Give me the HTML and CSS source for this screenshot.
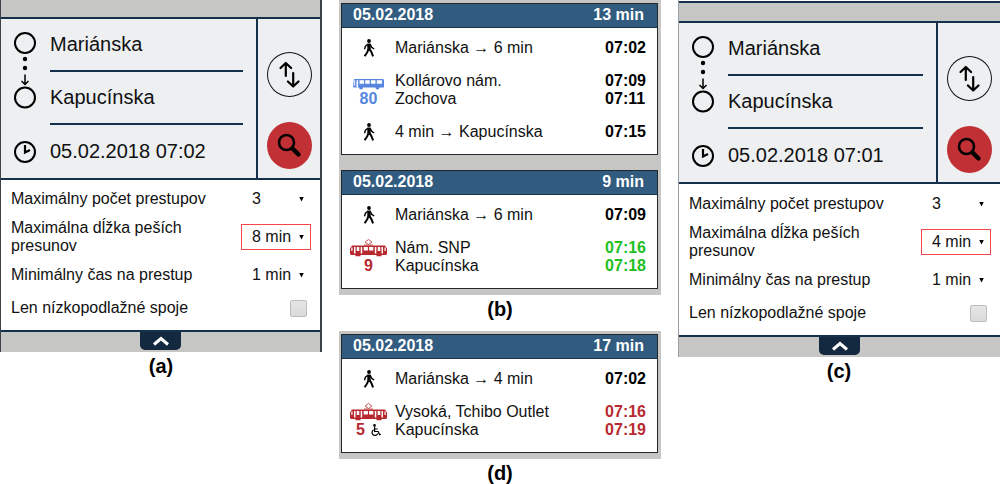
FILE: index.html
```html
<!DOCTYPE html>
<html lang="sk">
<head>
<meta charset="utf-8">
<meta name="viewport" content="width=device-width, initial-scale=1">
<title>05.02.2018</title>
<link rel="stylesheet" href="styles.css">
</head>
<body>
<svg class="sprite" aria-hidden="true">
  <symbol id="route" viewBox="0 0 24 78">
    <g fill="none" stroke="#000" stroke-width="2">
      <circle cx="12" cy="12" r="10"/>
      <circle cx="12" cy="66.500" r="10"/>
      <path d="M12 43.500v10M8.500 50l3.500 3.500 3.500-3.500" stroke-width="1.500"/>
    </g>
    <circle cx="12" cy="28" r="2.200"/>
    <circle cx="12" cy="37" r="2.200"/>
  </symbol>
  <symbol id="clock" viewBox="0 0 24 24">
    <circle cx="12" cy="12" r="10" fill="none" stroke="#000" stroke-width="2"/>
    <path d="M12 5v7.500l5-2.600" fill="none" stroke="#000" stroke-width="2.200"/>
  </symbol>
  <symbol id="swap" viewBox="0 0 45 45">
    <g fill="none" stroke="#000" stroke-linecap="round" stroke-linejoin="round" stroke-width="2.200">
      <path d="M18.800 24V11.500M13.500 16l5.300-5 5.300 5"/>
      <path d="M26.200 21v13M20.900 29.500l5.300 5 5.300-5"/>
    </g>
  </symbol>
  <symbol id="search" viewBox="0 0 45 47">
    <circle cx="19.500" cy="20.500" r="7.500" fill="none" stroke="#000" stroke-width="2.600"/>
    <path d="M25.500 26.500l6 6" stroke="#000" stroke-width="4.400" stroke-linecap="round"/>
  </symbol>
  <symbol id="chevron" viewBox="0 0 18 10">
    <path d="M2 8.500l7-6 7 6" fill="none" stroke="#fff" stroke-width="3"/>
  </symbol>
  <symbol id="walk" viewBox="0 0 12 18">
    <circle cx="6" cy="2" r="1.900"/>
    <path d="M4.300 4.500h3.400v6.300H4.300z"/>
    <g fill="none" stroke="#000" stroke-linejoin="round">
      <path d="M5 5.300L2.500 7 1.500 10.200M7.200 5.300l1.500 3 2.500 1.700" stroke-width="1.400"/>
      <path d="M5.200 10.500L4.300 13.300 1.600 17.200M6.700 10.300l1.800 3 1.600 4" stroke-width="2"/>
    </g>
  </symbol>
  <symbol id="bus" viewBox="0 0 31 12">
    <path fill="#5686e0" fill-rule="evenodd" d="M1 1h29.300l.7 1.500v7H.5L0 8.500zM1.200 2.200V8h.9V2.200zM3.500 2.200v7h1.600v-7zM6.500 2.200v3.500H11V2.200zM12.200 2.200v3.500h4.500V2.200zM18 2.200v3.500h4.500V2.200zM23.800 2.200v3.500H29V2.200z"/>
    <circle cx="8" cy="9.500" r="2" fill="#5686e0"/>
    <circle cx="24.500" cy="9.500" r="2" fill="#5686e0"/>
  </symbol>
  <symbol id="tram" viewBox="0 0 37 18">
    <path d="M18.500 0.500l-3.500 2.700 3.500 2.300 3.500-2.300zM14 6h9" fill="none" stroke="#c8565a"/>
    <path fill="#b8292f" fill-rule="evenodd" d="M2 6.500h33l2 3v5.500l-1 1H1l-1-1V9.500zM1.300 8.500V12h1.200V8.500zM4 8v6.500h1.500V8zM6.700 8v4h2.600V8zM10.700 8v6.500h1.500V8zM13.700 8v3.500h4.200V8zM19.100 8v3.500h4.200V8zM24.800 8v6.500h1.500V8zM27.700 8v4h2.600V8zM31.500 8v6.500H33V8zM34.500 8.500V12h1.200V8.500z"/>
    <path d="M5.500 16.500h5M26.500 16.500h5" stroke="#b8292f" stroke-width="1.600"/>
  </symbol>
  <symbol id="wheelchair" viewBox="0 0 10 12">
    <circle cx="3.500" cy="1.400" r="1.300"/>
    <path d="M3.600 2.800v4.700h3.600l1.500 3.200 1.200-.5M3.800 5h2.900M2.600 5.800a3 3 0 1 0 4.300 3.600" fill="none" stroke="#000" stroke-width="1.200"/>
  </symbol>
</svg>

<main class="board">
  <figure class="shot">
    <div class="planner">
      <div class="strip"></div>
      <form class="query">
        <div class="fields">
          <svg class="route-icon" aria-hidden="true"><use href="#route"/></svg>
          <input class="field" type="text" aria-label="Odkiaľ" value="Mariánska">
          <input class="field" type="text" aria-label="Kam" value="Kapucínska">
          <svg class="clock-icon" aria-hidden="true"><use href="#clock"/></svg>
          <input class="field field-plain" type="text" aria-label="Čas" value="05.02.2018 07:02">
        </div>
        <div class="actions">
          <button class="swap" type="button" aria-label="Vymeniť"><svg aria-hidden="true"><use href="#swap"/></svg></button>
          <button class="search" type="submit" aria-label="Hľadať"><svg aria-hidden="true"><use href="#search"/></svg></button>
        </div>
      </form>
      <div class="settings">
        <div class="setting">
          <label for="a-transfers">Maximálny počet prestupov</label>
          <span class="picker"><select id="a-transfers"><option>3</option></select></span>
        </div>
        <div class="setting">
          <label for="a-walk">Maximálna dĺžka peších presunov</label>
          <span class="picker picker-marked"><select id="a-walk"><option>8 min</option></select></span>
        </div>
        <div class="setting">
          <label for="a-time">Minimálny čas na prestup</label>
          <span class="picker"><select id="a-time"><option>1 min</option></select></span>
        </div>
        <div class="setting">
          <label for="a-low">Len nízkopodlažné spoje</label>
          <input class="check" id="a-low" type="checkbox">
        </div>
      </div>
      <div class="strip strip-bottom">
        <button class="toggle" type="button" aria-label="Zbaliť"><svg aria-hidden="true"><use href="#chevron"/></svg></button>
      </div>
    </div>
    <figcaption>(a)</figcaption>
  </figure>

  <div class="middle">
    <figure class="shot">
      <div class="results">
        <article class="card">
          <header class="card-head"><span>05.02.2018</span><span>13 min</span></header>
          <ul class="legs">
            <li class="leg">
              <div class="mode"><svg class="walk" aria-hidden="true"><use href="#walk"/></svg></div>
              <div class="stops">Mariánska → 6 min</div>
              <div class="times">07:02</div>
            </li>
            <li class="leg">
              <div class="mode line-bus"><svg class="bus" aria-hidden="true"><use href="#bus"/></svg><span class="line">80</span></div>
              <div class="stops"><div>Kollárovo nám.</div><div>Zochova</div></div>
              <div class="times"><div>07:09</div><div>07:11</div></div>
            </li>
            <li class="leg">
              <div class="mode"><svg class="walk" aria-hidden="true"><use href="#walk"/></svg></div>
              <div class="stops">4 min → Kapucínska</div>
              <div class="times">07:15</div>
            </li>
          </ul>
        </article>
        <article class="card">
          <header class="card-head"><span>05.02.2018</span><span>9 min</span></header>
          <ul class="legs">
            <li class="leg">
              <div class="mode"><svg class="walk" aria-hidden="true"><use href="#walk"/></svg></div>
              <div class="stops">Mariánska → 6 min</div>
              <div class="times">07:09</div>
            </li>
            <li class="leg">
              <div class="mode line-tram"><svg class="tram" aria-hidden="true"><use href="#tram"/></svg><span class="line">9</span></div>
              <div class="stops"><div>Nám. SNP</div><div>Kapucínska</div></div>
              <div class="times on-time"><div>07:16</div><div>07:18</div></div>
            </li>
          </ul>
        </article>
      </div>
      <figcaption>(b)</figcaption>
    </figure>

    <figure class="shot">
      <div class="results">
        <article class="card">
          <header class="card-head"><span>05.02.2018</span><span>17 min</span></header>
          <ul class="legs">
            <li class="leg">
              <div class="mode"><svg class="walk" aria-hidden="true"><use href="#walk"/></svg></div>
              <div class="stops">Mariánska → 4 min</div>
              <div class="times">07:02</div>
            </li>
            <li class="leg">
              <div class="mode line-tram"><svg class="tram" aria-hidden="true"><use href="#tram"/></svg><span class="line">5<svg class="wheelchair" aria-hidden="true"><use href="#wheelchair"/></svg></span></div>
              <div class="stops"><div>Vysoká, Tchibo Outlet</div><div>Kapucínska</div></div>
              <div class="times late"><div>07:16</div><div>07:19</div></div>
            </li>
          </ul>
        </article>
      </div>
      <figcaption>(d)</figcaption>
    </figure>
  </div>

  <figure class="shot">
    <div class="planner planner-open">
      <div class="strip"></div>
      <form class="query">
        <div class="fields">
          <svg class="route-icon" aria-hidden="true"><use href="#route"/></svg>
          <input class="field" type="text" aria-label="Odkiaľ" value="Mariánska">
          <input class="field" type="text" aria-label="Kam" value="Kapucínska">
          <svg class="clock-icon" aria-hidden="true"><use href="#clock"/></svg>
          <input class="field field-plain" type="text" aria-label="Čas" value="05.02.2018 07:01">
        </div>
        <div class="actions">
          <button class="swap" type="button" aria-label="Vymeniť"><svg aria-hidden="true"><use href="#swap"/></svg></button>
          <button class="search" type="submit" aria-label="Hľadať"><svg aria-hidden="true"><use href="#search"/></svg></button>
        </div>
      </form>
      <div class="settings">
        <div class="setting">
          <label for="c-transfers">Maximálny počet prestupov</label>
          <span class="picker"><select id="c-transfers"><option>3</option></select></span>
        </div>
        <div class="setting">
          <label for="c-walk">Maximálna dĺžka peších presunov</label>
          <span class="picker picker-marked"><select id="c-walk"><option>4 min</option></select></span>
        </div>
        <div class="setting">
          <label for="c-time">Minimálny čas na prestup</label>
          <span class="picker"><select id="c-time"><option>1 min</option></select></span>
        </div>
        <div class="setting">
          <label for="c-low">Len nízkopodlažné spoje</label>
          <input class="check" id="c-low" type="checkbox">
        </div>
      </div>
      <div class="strip strip-bottom">
        <button class="toggle" type="button" aria-label="Zbaliť"><svg aria-hidden="true"><use href="#chevron"/></svg></button>
      </div>
    </div>
    <figcaption>(c)</figcaption>
  </figure>
</main>
</body>
</html>
```

FILE: styles.css
```css
:root {
  --navy: #15304a;
  --grey: #c6c6c4;
  --red: #b8292f;
}

* {
  box-sizing: border-box;
}

body {
  margin: 0;
  background: #fff;
  color: #111;
  font: 16px/18px "Liberation Sans", Arial, sans-serif;
}

svg {
  display: block;
}

.sprite {
  display: none;
}

.board {
  display: grid;
  grid-template-columns: repeat(3, minmax(0, 1fr));
  gap: 17px;
  align-items: start;
}

.shot {
  margin: 0;
}

figcaption {
  padding-top: 2px;
  color: #000;
  font-size: 20px;
  font-weight: bold;
  line-height: 24px;
  text-align: center;
}

.middle {
  display: grid;
  gap: 10px;
}

/* Search panel */

.planner {
  border: solid #3c4248;
  border-width: 0 2px 0 1px;
}

.planner-open {
  padding-top: 1px;
  border-width: 0 0 0 1px;
  border-color: #9a9ea2;
}

.strip {
  height: 17px;
  background: var(--grey);
}

.planner-open .strip:first-child {
  height: 20px;
  border-top: 2px solid var(--navy);
}

.query {
  display: grid;
  grid-template-columns: minmax(0, 1fr) 64px;
  border: solid var(--navy);
  border-width: 2px 0;
  background: #edeff1;
}

.fields {
  display: grid;
  grid-template-columns: 24px minmax(0, 1fr);
  grid-auto-rows: 53px;
  column-gap: 13px;
  padding: 0 13px 0 12px;
}

.route-icon {
  grid-row: span 2;
  align-self: start;
  width: 24px;
  height: 78px;
  margin-top: 12px;
}

.clock-icon {
  align-self: center;
  width: 24px;
  height: 24px;
}

.field {
  width: 100%;
  min-width: 0;
  padding: 0;
  border: 0;
  border-bottom: 2px solid var(--navy);
  border-radius: 0;
  background: none;
  color: #111;
  font: inherit;
  font-size: 20px;
}

.field-plain {
  border-bottom: 0;
}

.actions {
  display: flex;
  flex-direction: column;
  align-items: center;
  gap: 25px;
  padding-top: 33px;
  border-left: 2px solid var(--navy);
}

.swap,
.search {
  width: 45px;
  padding: 0;
  border: 0;
  border-radius: 50%;
}

.swap {
  height: 45px;
  background: none;
  box-shadow: inset 0 0 0 1px #111;
}

.search {
  height: 47px;
  background: #c03035;
}

.swap svg,
.search svg {
  width: 100%;
  height: 100%;
}

.settings {
  display: grid;
  gap: 7px;
  padding: 6px 9px 9px 10px;
  background: #fff;
}

.planner-open .settings {
  padding-top: 7px;
}

.setting {
  display: flex;
  align-items: center;
  justify-content: space-between;
  min-height: 26px;
}

.picker {
  display: grid;
  flex: none;
  align-items: center;
  width: 70px;
  border: 1px solid transparent;
}

.picker-marked {
  border-color: #f4464a;
}

.picker select,
.picker::after {
  grid-area: 1 / 1;
}

.picker::after {
  content: "";
  justify-self: end;
  width: 5px;
  height: 5px;
  margin-right: 6px;
  background: #000;
  clip-path: polygon(0 0, 100% 0, 50% 100%);
  pointer-events: none;
}

.picker select {
  width: 100%;
  height: 24px;
  padding: 0 0 0 10px;
  border: 0;
  background: none;
  color: #111;
  font: inherit;
  appearance: none;
}

.check {
  width: 17px;
  height: 17px;
  margin: 0 4px 0 0;
  border: 1px solid #bcbcbc;
  border-radius: 2px;
  background: linear-gradient(#e6e6e6, #dadada);
  appearance: none;
}

.check:checked {
  background: var(--navy);
}

.strip-bottom {
  display: flex;
  align-items: flex-start;
  justify-content: center;
  height: 22px;
  border-top: 2px solid var(--navy);
}

.toggle {
  display: grid;
  place-items: center;
  width: 41px;
  height: 18px;
  padding: 0;
  border: 0;
  border-radius: 0 0 5px 5px;
  background: #13293f;
}

.toggle svg {
  width: 18px;
  height: 10px;
}

/* Result cards */

.results {
  display: grid;
  gap: 15px;
  padding: 3px 3px 6px 2px;
  background: var(--grey);
}

.card {
  border: 1px solid #20282e;
  background: #fff;
}

.card-head {
  display: flex;
  justify-content: space-between;
  padding: 2px 13px 3px 11px;
  border-bottom: 1px solid #1c3246;
  background: #315c80;
  color: #fff;
  font-weight: bold;
}

.legs {
  display: grid;
  gap: 15px;
  margin: 0;
  padding: 11px 11px 13px 0;
  list-style: none;
}

.leg {
  display: grid;
  grid-template-columns: 53px minmax(0, 1fr) auto;
}

.mode {
  display: flex;
  flex-direction: column;
  align-items: center;
  justify-content: flex-end;
}

.line {
  display: flex;
  align-items: center;
  gap: 6px;
  font-weight: bold;
}

.line-bus {
  color: #5686e0;
}

.line-tram,
.late {
  color: var(--red);
}

.walk {
  width: 12px;
  height: 18px;
}

.bus {
  width: 31px;
  height: 12px;
}

.tram {
  width: 37px;
  height: 18px;
}

.wheelchair {
  width: 10px;
  height: 12px;
}

.times {
  color: #000;
  font-weight: bold;
}

.times.on-time {
  color: #1fc01f;
}

.times.late {
  color: var(--red);
}
```
